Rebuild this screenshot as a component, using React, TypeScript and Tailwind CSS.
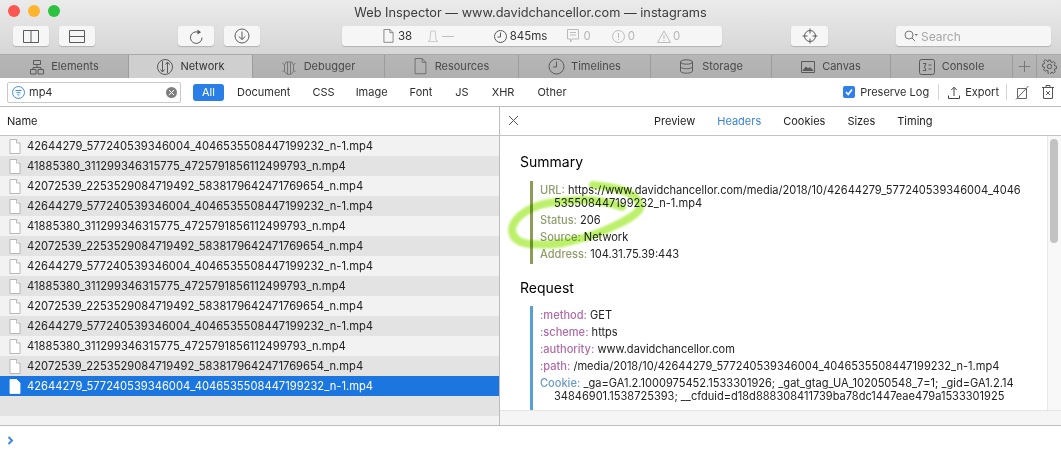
import React from "react";

const ink = "#5a5a5a";

function Doc({ c = "#6f6f6f", fill = "none", s = 14 }: { c?: string; fill?: string; s?: number }) {
  return (
    <svg width={s} height={s * 1.25} viewBox="0 0 12 15" fill={fill} stroke={c} strokeWidth="0.8">
      <path d="M1 .5h6.500L11 4v10.500H1z" />
      <path d="M7.500.5V4H11" />
    </svg>
  );
}

function Ic({ w = 18, h = 18, children, c = ink }: { w?: number; h?: number; children: React.ReactNode; c?: string }) {
  return (
    <svg width={w} height={h} viewBox={`0 0 ${w} ${h}`} fill="none" stroke={c} strokeWidth="1">
      {children}
    </svg>
  );
}

function ToolBtn({ w, ml, children }: { w: string; ml: string; children?: React.ReactNode }) {
  return (
    <div className={`${w} ${ml} h-[20px] flex items-center justify-center rounded-[3px] bg-[#f6f6f6] shadow-[0_1px_1px_rgba(0,0,0,0.18)]`}>
      {children}
    </div>
  );
}

const tabs: { name: string; w: string; icon: React.ReactNode; active?: boolean; gap: string }[] = [
  { name: "Elements", w: "w-[129px]", gap: "gap-[6px]", icon: (
    <Ic w={16} h={16}><path d="M4.500 1.500h7v4h-7zM1.500 10.500h5.500v4.500H1.500zM9 10.500h5.500v4.500H9zM8 5.500v3M4 10.500V8.500h8v2" /></Ic>
  ) },
  { name: "Network", w: "w-[124px]", gap: "gap-[6px]", active: true, icon: (
    <Ic w={18} h={18}><circle cx="9" cy="9" r="7.500" /><path d="M6.500 3v11M4.500 11.500l2 2.500 2-2.500M11.500 15V4M9.500 6.500l2-2.500 2 2.500" /></Ic>
  ) },
  { name: "Debugger", w: "w-[132px]", gap: "gap-[8px]", icon: (
    <Ic w={14} h={16} c="#777"><path d="M4 3h6l1.500 3v5a4.500 4.500 0 0 1-9 0V6zM5.500 3v12M8.500 3v12M2.500 6 .5 4M11.500 6l2-2M2.500 11 .5 13M11.500 11l2 2" /></Ic>
  ) },
  { name: "Resources", w: "w-[134px]", gap: "gap-[8px]", icon: <Doc c="#666" s={13} /> },
  { name: "Timelines", w: "w-[132px]", gap: "gap-[6px]", icon: (
    <Ic w={17} h={17}><circle cx="8.500" cy="8.500" r="7.500" /><path d="M8.500 3.500v5.500H5" /></Ic>
  ) },
  { name: "Storage", w: "w-[121px]", gap: "gap-[8px]", icon: (
    <Ic w={15} h={15}><ellipse cx="7.500" cy="3" rx="6" ry="2.200" /><path d="M1.500 3v9c0 1.200 2.700 2.200 6 2.200s6-1 6-2.200V3M1.500 7.500c0 1.200 2.700 2.200 6 2.200s6-1 6-2.200" /></Ic>
  ) },
  { name: "Canvas", w: "w-[119px]", gap: "gap-[7px]", icon: (
    <Ic w={14} h={12}><path d="M.5.5h13v11H.5z" /><path d="m2 9.500 3-3.500 2 2 2-1.500 3 3z" fill={ink} /></Ic>
  ) },
  { name: "Console", w: "w-[122px]", gap: "gap-[7px]", icon: (
    <Ic w={16} h={16}><rect x=".5" y=".5" width="15" height="15" rx="2" /><path d="M4 4.500h3l-1.500 3.500L7 11.500H4M9.500 6h3M9.500 10h3" /></Ic>
  ) },
];

const f1 = "42644279_577240539346004_4046535508447199232_n-1.mp4";
const f2 = "41885380_311299346315775_4725791856112499793_n.mp4";
const f3 = "42072539_2253529084719492_5838179642471769654_n.mp4";
const files = [f1, f2, f3, f1, f2, f3, f1, f2, f3, f1, f2, f3, f1];

const filters = [
  ["Document", "ml-[13px]"],
  ["CSS", "ml-[22px]"],
  ["Image", "ml-[21px]"],
  ["Font", "ml-[22px]"],
  ["JS", "ml-[23px]"],
  ["XHR", "ml-[23px]"],
  ["Other", "ml-[23px]"],
];

function Kv({ k, color, children, mt = "mt-[4px]" }: { k: string; color: string; children: React.ReactNode; mt?: string }) {
  return (
    <div className={`${mt} whitespace-nowrap`}>
      <span className="font-medium" style={{ color }}>{k}:</span> {children}
    </div>
  );
}

export default function App() {
  return (
    <div className="relative w-[1061px] h-[455px] overflow-hidden bg-white text-[11px] leading-[13px] text-black font-['Inter',sans-serif]">
      {/* Title + toolbar */}
      <div className="h-[54px] bg-gradient-to-b from-[#ebebeb] to-[#d6d6d6] relative">
        <div className="absolute left-[8px] top-[5px] flex gap-[8px]">
          <span className="w-[12px] h-[12px] rounded-full bg-[#f9574f]" />
          <span className="w-[12px] h-[12px] rounded-full bg-[#fdb52d]" />
          <span className="w-[12px] h-[12px] rounded-full bg-[#2cc13f]" />
        </div>
        <div className="h-[23px] flex items-center justify-center text-[12.750px] text-[#3b3b3b] pt-[1px]">
          Web Inspector — www.davidchancellor.com — instagrams
        </div>
        <div className="flex mt-[3px]">
          <ToolBtn w="w-[36px]" ml="ml-[13px]">
            <Ic w={16} h={13}><path d="M.5.5h15v12H.5zM8 .5v12" /></Ic>
          </ToolBtn>
          <ToolBtn w="w-[36px]" ml="ml-[10px]">
            <Ic w={16} h={13}><path d="M.5.5h15v12H.5zM.5 6.500h15" /></Ic>
          </ToolBtn>
          <ToolBtn w="w-[36px]" ml="ml-[83px]">
            <Ic w={15} h={15}><path d="M9.500 3.300A5.800 5.800 0 1 0 13 8.500" /><path d="M8.500 .5 12 3.200 8.500 5.500z" fill={ink} stroke="none" /></Ic>
          </ToolBtn>
          <ToolBtn w="w-[36px]" ml="ml-[10px]">
            <Ic w={16} h={16}><circle cx="8" cy="8" r="7" /><path d="M8 3.500v8M4.800 8.500 8 11.500l3.200-3" /></Ic>
          </ToolBtn>
          <div className="ml-[82px] w-[380px] h-[20px] rounded-[3px] bg-[#f6f6f6] shadow-[0_1px_1px_rgba(0,0,0,0.18)] flex items-center text-[11.500px] text-[#333]">
            <span className="ml-[41px] flex"><Doc c="#666" s={11} /></span>
            <span className="ml-[4px]">38</span>
            <span className="ml-[15px] flex">
              <Ic w={12} h={12} c="#ccc"><path d="M3.800 1h4.400l.8 9 2 1.500H1L3 10z" /></Ic>
            </span>
            <span className="ml-[3px] text-[#bbb]">—</span>
            <span className="ml-[40px] flex">
              <Ic w={13} h={13}><circle cx="6.500" cy="6.500" r="6" /><path d="M6.500 2.500V7H3.500" /></Ic>
            </span>
            <span className="ml-[3px]">845ms</span>
            <span className="ml-[20px] flex">
              <Ic w={12} h={14} c="#bbb"><path d="M.5.5h11v9.500H5L3.500 13V10h-3zM3 3.500h6M3 6h6" /></Ic>
            </span>
            <span className="ml-[4px] text-[#b5b5b5]">0</span>
            <span className="ml-[21px] flex">
              <Ic w={13} h={13} c="#bbb"><circle cx="6.500" cy="6.500" r="6" /><path d="M6.500 3v5M6.500 9v1" /></Ic>
            </span>
            <span className="ml-[3px] text-[#b5b5b5]">0</span>
            <span className="ml-[22px] flex">
              <Ic w={14} h={13} c="#bbb"><path d="M7 1 13.500 12.500H.5zM7 5v4M7 10v1" /></Ic>
            </span>
            <span className="ml-[2px] text-[#b5b5b5]">0</span>
          </div>
          <ToolBtn w="w-[37px]" ml="ml-[69px]">
            <Ic w={16} h={16}><circle cx="8" cy="8" r="5.500" /><path d="M8 .5v5M8 10.500v5M.5 8h5M10.500 8h5" /></Ic>
          </ToolBtn>
          <div className="ml-[68px] w-[155px] h-[20px] rounded-[3px] bg-[#f6f6f6] shadow-[0_1px_1px_rgba(0,0,0,0.18)] flex items-center text-[12px] text-[#a6a6a6]">
            <span className="ml-[8px] flex">
              <Ic w={14} h={12} c="#777"><circle cx="5" cy="5" r="4" /><path d="m8 8 3 3" /><path d="M10.500 4h3.500l-1.750 2z" fill="#777" stroke="none" /></Ic>
            </span>
            <span className="ml-[3px]">Search</span>
          </div>
        </div>
      </div>

      {/* Tab bar */}
      <div className="h-[24px] flex border-t border-t-[#a9a9a9] bg-gradient-to-b from-[#b6b6b6] to-[#b0b0b0] text-[11px] text-[#4a4a4a]">
        {tabs.map((t) => (
          <div
            key={t.name}
            className={`${t.w} ${t.gap} h-full flex items-center justify-center border-r border-r-[#9c9c9c] ${t.active ? "bg-[#cfcfcf] text-[#333]" : ""}`}
          >
            {t.icon}
            <span>{t.name}</span>
          </div>
        ))}
        <div className="w-[24px] h-full flex items-center justify-center border-r border-r-[#9c9c9c]">
          <Ic w={13} h={13} c="#777"><path d="M6.500 1v11M1 6.500h11" /></Ic>
        </div>
        <div className="flex-1 flex items-center justify-center">
          <Ic w={15} h={15} c="#555">
            <circle cx="7.500" cy="7.500" r="2.200" />
            <path d="M6.300 1h2.400l.3 1.900 1.300.6 1.600-1.100 1.700 1.700-1.100 1.600.6 1.300 1.900.3v2.400l-1.900.3-.6 1.300 1.100 1.600-1.700 1.700-1.600-1.100-1.300.6-.3 1.900H6.300L6 12.100l-1.300-.6-1.600 1.100-1.700-1.700 1.100-1.600-.6-1.300L0 7.700V5.300l1.900-.3.600-1.300L1.400 2.100l1.700-1.700 1.600 1.100L6 2.900z" transform="translate(.2 .2) scale(.96)" />
          </Ic>
        </div>
      </div>

      {/* Filter bar */}
      <div className="h-[29px] flex items-center bg-white border-b border-b-[#bdbdbd] text-[#2e2e2e] text-[11px]">
        <div className="ml-[7px] w-[174px] h-[21px] rounded-[2px] border border-[#c9c9c9] flex items-center text-[11px]">
          <span className="ml-[4px] flex">
            <Ic w={13} h={13} c="#3d8fe0"><circle cx="6.500" cy="6.500" r="6" /><path d="M3.500 4.500h6M4.500 6.700h4M5.500 8.900h2" /></Ic>
          </span>
          <span className="ml-[4px]">mp4</span>
          <span className="ml-auto mr-[3px] w-[11px] h-[11px] rounded-full bg-[#7f7f7f] flex items-center justify-center">
            <Ic w={7} h={7} c="#fff"><path d="m1 1 5 5M6 1 1 6" /></Ic>
          </span>
        </div>
        <div className="ml-[12px] w-[31px] h-[17px] rounded-[3px] bg-[#2a7fe6] text-white flex items-center justify-center">All</div>
        {filters.map(([n, ml]) => (
          <span key={n} className={ml}>{n}</span>
        ))}
        <span className="ml-auto w-[12px] h-[12px] rounded-[2px] bg-[#2f80ea] flex items-center justify-center">
          <Ic w={10} h={10} c="#fff"><path d="m2 5 2.200 2.500L8 2.500" strokeWidth="1.600" /></Ic>
        </span>
        <span className="ml-[5px]">Preserve Log</span>
        <span className="ml-[9px] w-px h-[16px] bg-[#d5d5d5]" />
        <span className="ml-[9px] flex">
          <Ic w={12} h={13} c="#444"><path d="M6 10V1.500M3.300 4 6 1.200 8.700 4M.5 9.500v3h11v-3" /></Ic>
        </span>
        <span className="ml-[5px]">Export</span>
        <span className="ml-[7px] w-px h-[16px] bg-[#d5d5d5]" />
        <span className="ml-[8px] flex">
          <Ic w={15} h={15} c="#666"><path d="M2.500 3.500h9v10h-9zM1 14.500 13.500 1" /></Ic>
        </span>
        <span className="ml-[12px] mr-[7px] flex">
          <Ic w={12} h={14} c="#555"><path d="M0 2.500h12M4 2.500V.5h4v2M1.500 2.500v11h9v-11M4 6l4 4M8 6l-4 4" /></Ic>
        </span>
      </div>

      {/* Split */}
      <div className="flex h-[319px] border-b border-b-[#bdbdbd]">
        {/* Left list */}
        <div className="w-[500px] border-r border-r-[#bdbdbd] flex flex-col">
          <div className="h-[29px] shrink-0 flex items-center pl-[7px] text-[11px] text-[#222] border-b border-b-[#c4c4c4]">Name</div>
          <div className="flex-1 flex flex-col text-[11.200px]">
            {files.map((f, i) => {
              const sel = i === 12;
              return (
                <div
                  key={i}
                  className={`h-[20px] flex items-center ${sel ? "bg-[#1b76e0] text-white" : i % 2 ? "bg-[#e3e3e3] text-[#222]" : "bg-[#f2f2f2] text-[#222]"}`}
                >
                  <span className="ml-[9px] w-[18px] flex">
                    <Doc c={sel ? "#fff" : "#a8a8a8"} fill="#fff" s={12} />
                  </span>
                  <span>{f}</span>
                </div>
              );
            })}
            <div className="h-[20px] bg-[#e3e3e3]" />
            <div className="flex-1 bg-[#f2f2f2]" />
          </div>
        </div>

        {/* Right detail */}
        <div className="flex-1 flex flex-col relative">
          <div className="h-[29px] shrink-0 flex items-center border-b border-b-[#c4c4c4] text-[11px] text-[#222] relative">
            <span className="absolute left-[8px] top-[8px] flex">
              <Ic w={11} h={11} c="#555"><path d="m1 1 9 9M10 1l-9 9" /></Ic>
            </span>
            <span className="ml-[154px]">Preview</span>
            <span className="ml-[22px] text-[#3a82dc]">Headers</span>
            <span className="ml-[22px]">Cookies</span>
            <span className="ml-[22px]">Sizes</span>
            <span className="ml-[22px]">Timing</span>
          </div>
          <div className="h-[275px] shrink-0 overflow-hidden flex text-[11.050px] text-[#222] border-b border-b-[#e4e4e4]">
            <div className="w-[547px] pl-[20px] pt-[18px] shrink-0">
              <div className="text-[14px] leading-[16px] text-black">Summary</div>
              <div className="mt-[11px] ml-[10px] w-[510px] border-l-[3px] border-l-[#8f9c58] pl-[7px] py-[3px]">
                <Kv k="URL" color="#8f9c6c" mt="mt-0">https://www.davidchancellor.com/media/2018/10/42644279_577240539346004_4046</Kv>
                <div className="pl-[14px]">535508447199232_n-1.mp4</div>
                <Kv k="Status" color="#8f9c6c">206</Kv>
                <Kv k="Source" color="#8f9c6c">Network</Kv>
                <Kv k="Address" color="#8f9c6c">104.31.75.39:443</Kv>
              </div>
              <div className="mt-[16px] text-[14px] leading-[16px] text-black">Request</div>
              <div className="mt-[10px] ml-[10px] w-[510px] border-l-[3px] border-l-[#5a9fd4] pl-[7px] pt-[3px] pb-[30px]">
                <Kv k=":method" color="#b06aa8" mt="mt-0">GET</Kv>
                <Kv k=":scheme" color="#b06aa8">https</Kv>
                <Kv k=":authority" color="#b06aa8">www.davidchancellor.com</Kv>
                <Kv k=":path" color="#b06aa8">/media/2018/10/42644279_577240539346004_4046535508447199232_n-1.mp4</Kv>
                <Kv k="Cookie" color="#6b9ac8">_ga=GA1.2.1000975452.1533301926; _gat_gtag_UA_102050548_7=1; _gid=GA1.2.14</Kv>
                <div className="pl-[14px] whitespace-nowrap">34846901.1538725393; __cfduid=d18d888308411739ba78dc1447eae479a1533301925</div>
              </div>
            </div>
            <div className="flex-1 border-l border-l-[#e8e8e8] bg-[#f8f8f8] pt-[3px] pl-[2px]">
              <div className="w-[8px] h-[104px] rounded-full bg-[#c2c2c2]" />
            </div>
          </div>
          <div className="flex-1 bg-[#f5f5f5]" />
        </div>
      </div>

      {/* Console prompt */}
      <div className="h-[29px] flex items-center pl-[7px]">
        <svg width="7" height="9" viewBox="0 0 7 9" fill="none" stroke="#3a8be0" strokeWidth="2"><path d="m1.500 1 3.500 3.500L1.500 8" /></svg>
      </div>

      {/* Hand-drawn highlight */}
      <svg className="absolute left-[500px] top-[175px] pointer-events-none mix-blend-multiply blur-[1px]" width="160" height="80" viewBox="0 0 160 80" fill="none">
        <path
          d="M122 32C105 26 88 24 77 25C60 26 50 27 40 30C26 35 14 42 12 54C12 64 20 68 30 69C45 70 55 70 67 67C85 63 100 58 110 53C122 47 134 42 139 35C143 28 135 21 127 17C115 12 105 11 93 10"
          stroke="#bdf06a"
          strokeWidth="8"
          strokeLinecap="round"
        />
      </svg>
    </div>
  );
}
